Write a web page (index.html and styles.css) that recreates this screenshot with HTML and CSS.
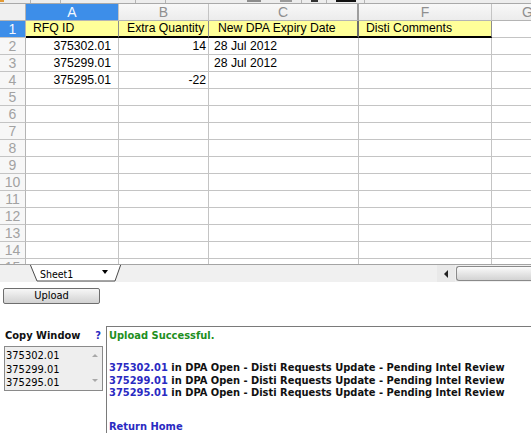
FILE: index.html
```html
<!DOCTYPE html>
<html>
<head>
<meta charset="utf-8">
<link rel="stylesheet" href="styles.css">
</head>
<body>
<div class="toolbar">
  <span class="tb tb-orange"></span>
  <span class="tb tb-sep s1"></span>
  <span class="tb tb-sep s2"></span>
  <span class="tb tb-sep s3"></span>
  <span class="tb tb-sep s4"></span>
  <span class="tb tb-icon i1"></span>
  <span class="tb tb-icon i2"></span>
  <span class="tb tb-sep s5"></span>
  <span class="tb tb-icon i3"></span>
  <span class="tb tb-sep s6"></span>
  <span class="tb tb-icon i4"></span>
  <span class="tb tb-sep s7"></span>
</div>

<div class="sheet">
  <div class="grid">
    <div class="cell corner"></div>
    <div class="cell ch sel">A</div>
    <div class="cell ch">B</div>
    <div class="cell ch thick">C</div>
    <div class="cell ch">F</div>
    <div class="cell ch">G</div>

    <div class="cell rh sel">1</div>
    <div class="cell hdr">RFQ ID</div>
    <div class="cell hdr pad8">Extra Quantity</div>
    <div class="cell hdr thick pad9">New DPA Expiry Date</div>
    <div class="cell hdr">Disti Comments</div>
    <div class="cell"></div>

    <div class="cell rh">2</div>
    <div class="cell num numa">375302.01</div>
    <div class="cell num">14</div>
    <div class="cell date">28 Jul 2012</div>
    <div class="cell"></div>
    <div class="cell"></div>

    <div class="cell rh">3</div>
    <div class="cell num numa">375299.01</div>
    <div class="cell num"></div>
    <div class="cell date">28 Jul 2012</div>
    <div class="cell"></div>
    <div class="cell"></div>

    <div class="cell rh">4</div>
    <div class="cell num numa">375295.01</div>
    <div class="cell num">-22</div>
    <div class="cell"></div>
    <div class="cell"></div>
    <div class="cell"></div>

    <div class="cell rh">5</div><div class="cell"></div><div class="cell"></div><div class="cell"></div><div class="cell"></div><div class="cell"></div>
    <div class="cell rh">6</div><div class="cell"></div><div class="cell"></div><div class="cell"></div><div class="cell"></div><div class="cell"></div>
    <div class="cell rh">7</div><div class="cell"></div><div class="cell"></div><div class="cell"></div><div class="cell"></div><div class="cell"></div>
    <div class="cell rh">8</div><div class="cell"></div><div class="cell"></div><div class="cell"></div><div class="cell"></div><div class="cell"></div>
    <div class="cell rh">9</div><div class="cell"></div><div class="cell"></div><div class="cell"></div><div class="cell"></div><div class="cell"></div>
    <div class="cell rh">10</div><div class="cell"></div><div class="cell"></div><div class="cell"></div><div class="cell"></div><div class="cell"></div>
    <div class="cell rh">11</div><div class="cell"></div><div class="cell"></div><div class="cell"></div><div class="cell"></div><div class="cell"></div>
    <div class="cell rh">12</div><div class="cell"></div><div class="cell"></div><div class="cell"></div><div class="cell"></div><div class="cell"></div>
    <div class="cell rh">13</div><div class="cell"></div><div class="cell"></div><div class="cell"></div><div class="cell"></div><div class="cell"></div>
    <div class="cell rh">14</div><div class="cell"></div><div class="cell"></div><div class="cell"></div><div class="cell"></div><div class="cell"></div>
    <div class="cell rh">15</div><div class="cell"></div><div class="cell"></div><div class="cell"></div><div class="cell"></div><div class="cell"></div>
  </div>
</div>

<div class="tabbar">
  <div class="tab">
    <svg class="tab-shape" width="94" height="17" viewBox="0 0 94 17">
      <path d="M2 -1 L9 16 L87 16 L93 -1 Z" fill="#ffffff"/>
      <path d="M2 -1 L9 16 L87 16 L93 -1" fill="none" stroke="#4a4a4a" stroke-width="1"/>
    </svg>
    <span class="tab-label">Sheet1</span>
    <span class="tab-arrow"></span>
  </div>
  <div class="hs-btn"><span class="hs-tri"></span></div>
  <div class="hs-thumb"></div>
</div>

<div class="actions">
  <button class="btn">Upload</button>
</div>

<div class="result">
  <div class="left">
    <div class="cw-head"><span>Copy Window</span><span class="help">?</span></div>
    <div class="listbox">
      <div class="items">
        <div>375302.01</div>
        <div>375299.01</div>
        <div>375295.01</div>
      </div>
      <div class="vscroll">
        <span class="up"></span>
        <span class="down"></span>
      </div>
    </div>
  </div>
  <div class="right">
    <div class="ok">Upload Successful.</div>
    <div class="msgs">
      <div><span class="id">375302.01</span> in DPA Open - Disti Requests Update - Pending Intel Review</div>
      <div><span class="id">375299.01</span> in DPA Open - Disti Requests Update - Pending Intel Review</div>
      <div><span class="id">375295.01</span> in DPA Open - Disti Requests Update - Pending Intel Review</div>
    </div>
    <div class="home">Return Home</div>
  </div>
</div>
</body>
</html>
```

FILE: styles.css
```css
html, body {
  margin: 0;
  padding: 0;
}
body {
  width: 531px;
  height: 433px;
  overflow: hidden;
  background: #ffffff;
  font-family: "DejaVu Sans Condensed", "DejaVu Sans", sans-serif;
  color: #111;
}

/* top toolbar remnant */
.toolbar {
  height: 3px;
  border-bottom: 1px solid #a9a9a9;
  background: #ededed;
  display: flex;
  align-items: flex-start;
  overflow: hidden;
}
.tb { display: block; flex: none; }
.tb-orange { width: 4px; height: 2px; background: #e39a34; }
.tb-sep { width: 1px; height: 3px; background: #b4b4b4; }
.s1 { margin-left: 26px; }
.s2 { margin-left: 29px; }
.s3 { margin-left: 74px; }
.s4 { margin-left: 29px; }
.tb-icon { height: 2px; }
.i1 { width: 14px; margin-left: 81px; background: #8c8c8c; }
.i2 { width: 12px; margin-left: 19px; background: #9a9a9a; }
.s5 { margin-left: 9px; }
.i3 { width: 7px; margin-left: 9px; background: #333; }
.s6 { margin-left: 8px; }
.i4 { width: 20px; margin-left: 9px; background: #111; }
.s7 { margin-left: 8px; }

/* spreadsheet */
.sheet {
  height: 260px;
  overflow: hidden;
}
.grid {
  display: grid;
  grid-template-columns: 26px 93px 90px 150px 133px 72px;
  grid-auto-rows: 17px;
  width: 564px;
}
.cell {
  box-sizing: border-box;
  border-right: 1px solid #c4c4c4;
  border-bottom: 1px solid #c4c4c4;
  font-family: "Liberation Sans", Arial, sans-serif;
  font-size: 12.2px;
  line-height: 16px;
  padding: 0 6px;
  white-space: nowrap;
  overflow: hidden;
  color: #000;
}
.corner {
  background: #f0f0f0;
  border-right-color: #b4b4b4;
  border-bottom-color: #b4b4b4;
}
.ch {
  background: linear-gradient(#f8f8f8, #ececec);
  color: #8f8f8f;
  font-size: 14px;
  text-align: center;
  padding: 0;
  border-bottom-color: #b4b4b4;
}
.ch.thick {
  border-right: 2px solid #9e9e9e;
}
.rh {
  background: #f7f7f7;
  color: #a2a2a2;
  font-size: 14px;
  text-align: center;
  padding: 0;
  border-right-color: #b4b4b4;
}
.ch.sel, .rh.sel {
  background: #3d8ee9;
  color: #f4f8ff;
}
.hdr {
  background: #ffff99;
  border-right-color: #8c8c8c;
  border-bottom: 2px solid #000;
  line-height: 15px;
  padding-left: 7px;
}
.hdr.pad8 { padding-left: 8px; }
.hdr.pad9 { padding-left: 9px; }
.hdr.thick { border-right: 2px solid #6c6c6c; }
.num { text-align: right; padding-right: 2px; }
.num.numa { padding-right: 7px; }
.date { padding-left: 5px; }

/* sheet tabs + horizontal scroll */
.tabbar {
  height: 17px;
  border-top: 1px solid #a4a4a4;
  background: #f0f0f0;
  display: flex;
}
.tab {
  position: relative;
  width: 94px;
  height: 17px;
  margin-left: 28px;
  display: flex;
  align-items: center;
  box-sizing: border-box;
  padding-left: 12px;
  padding-right: 14px;
}
.tab-shape {
  position: absolute;
  left: 0;
  top: 0;
}
.tab-label {
  position: relative;
  font-size: 10.5px;
  line-height: 16px;
  color: #000;
}
.tab-arrow {
  position: relative;
  margin-left: auto;
  margin-bottom: 3px;
  width: 0;
  height: 0;
  border-left: 3.5px solid transparent;
  border-right: 3.5px solid transparent;
  border-top: 4px solid #000;
}
.hs-btn {
  margin-left: auto;
  width: 18px;
  background: #e9e9e9;
  display: flex;
  align-items: center;
  justify-content: center;
}
.hs-tri {
  width: 0;
  height: 0;
  border-top: 4px solid transparent;
  border-bottom: 4px solid transparent;
  border-right: 4px solid #222;
}
.hs-thumb {
  width: 74px;
  margin: 1px 0 1px 1px;
  border: 1px solid #8a8a8a;
  border-right: none;
  border-radius: 3px 0 0 3px;
  background: linear-gradient(#fbfbfb, #e6e6e6 50%, #d3d3d3);
}

/* upload button */
.actions {
  padding: 6px 0 0 3px;
}
.btn {
  display: block;
  width: 97px;
  height: 16px;
  padding: 0;
  margin: 0;
  border: 1px solid #6e6e6e;
  border-radius: 2px;
  background: linear-gradient(#f7f7f7, #e4e4e4 50%, #d2d2d2);
  font-family: "DejaVu Sans Condensed", "DejaVu Sans", sans-serif;
  font-size: 11px;
  line-height: 14px;
  color: #000;
}

/* result area */
.result {
  display: flex;
  margin-top: 22px;
  height: 107px;
}
.left {
  width: 106px;
  flex: none;
  box-sizing: border-box;
  padding: 3px 0 0 4px;
}
.cw-head {
  display: flex;
  justify-content: space-between;
  font-weight: bold;
  font-size: 11px;
  line-height: 13px;
  padding-left: 1px;
  padding-right: 5px;
  color: #111;
}
.help { color: #2a2ac2; }
.listbox {
  margin-top: 4px;
  width: 99px;
  height: 45px;
  box-sizing: border-box;
  border: 1px solid #8a8a8a;
  background: #eeeeee;
  display: flex;
}
.items {
  flex: 1;
  padding: 2px 0 0 1px;
  font-size: 11px;
  line-height: 13.5px;
  color: #000;
}
.vscroll {
  width: 14px;
  display: flex;
  flex-direction: column;
  justify-content: space-between;
  align-items: center;
  padding: 7px 0 8px;
  box-sizing: border-box;
}
.up, .down {
  width: 0;
  height: 0;
  border-left: 3px solid transparent;
  border-right: 3px solid transparent;
}
.up { border-bottom: 3px solid #a8a8a8; }
.down { border-top: 3px solid #a8a8a8; }

.right {
  flex: 1;
  border-top: 1px solid #7a7a7a;
  border-left: 1px solid #7a7a7a;
  padding: 2px 0 0 2px;
  font-weight: bold;
  font-size: 11px;
  line-height: 13px;
  white-space: nowrap;
}
.ok { color: #1e8f1e; }
.msgs {
  margin-top: 20px;
  line-height: 12.7px;
  color: #111;
}
.id { color: #2a2ac2; }
.home {
  margin-top: 20px;
  color: #2a2ac2;
}
```
